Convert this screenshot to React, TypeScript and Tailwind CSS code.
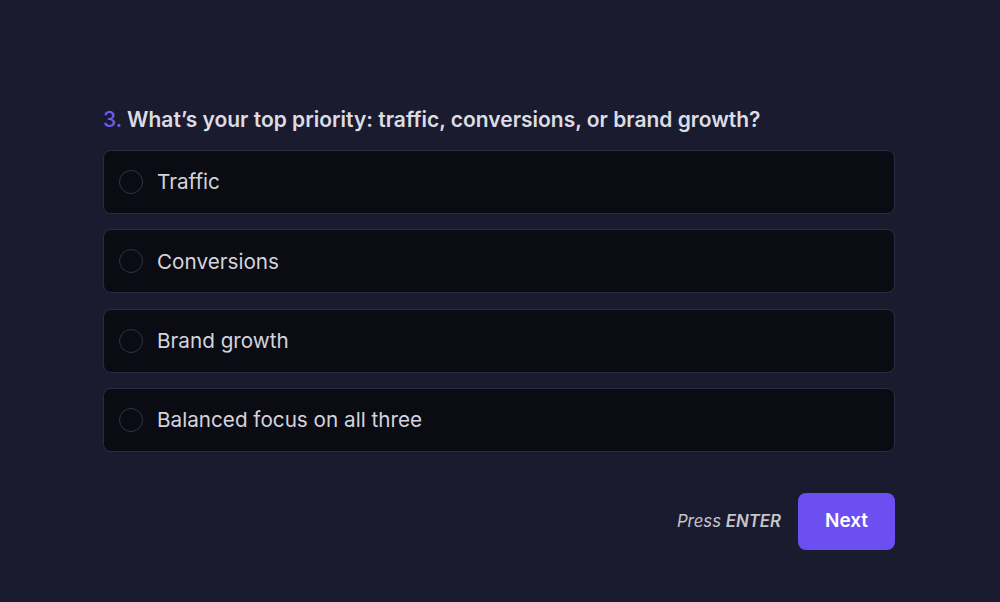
import React, { useState } from 'react'

const options = ['Traffic', 'Conversions', 'Brand growth', 'Balanced focus on all three']

export default function App() {
  const [selected, setSelected] = useState<number | null>(null)

  return (
    <div
      className="min-h-[602px] w-full bg-[#1b1b2f] px-[103px] pt-[106px]"
      style={{ fontFamily: 'Inter, "Noto Sans", sans-serif' }}
    >
      <h2 className="text-[21px] font-semibold leading-[27px] text-[#dcdce4]">
        <span className="mr-[5px] font-medium text-[#6d5cf0]">3.</span>
        What’s your top priority: traffic, conversions, or brand growth?
      </h2>

      <div className="mt-[17px] flex w-[792px] flex-col gap-[15.3px]">
        {options.map((opt, i) => (
          <button
            key={opt}
            onClick={() => setSelected(i)}
            className="flex h-[64px] items-center gap-[14px] rounded-[8px] border border-[#2b2b42] bg-[#0b0b14] pl-[15px] text-left"
          >
            <span
              className={`h-[24px] w-[24px] rounded-full border-[1.5px] ${
                selected === i ? 'border-[#6d5cf0] bg-[#6d5cf0]' : 'border-[#34343f]'
              }`}
            />
            <span className="text-[20.7px] text-[#d4d4dc]">{opt}</span>
          </button>
        ))}
      </div>

      <div className="mt-[41px] flex w-[792px] items-center justify-end gap-[17px]">
        <span className="text-[16.8px] italic text-[#c4c4cc]">
          Press <span className="font-semibold">ENTER</span>
        </span>
        <button className="h-[57px] w-[97px] rounded-[8px] bg-[#6b4ff0] text-[19px] font-semibold text-white">
          Next
        </button>
      </div>
    </div>
  )
}
